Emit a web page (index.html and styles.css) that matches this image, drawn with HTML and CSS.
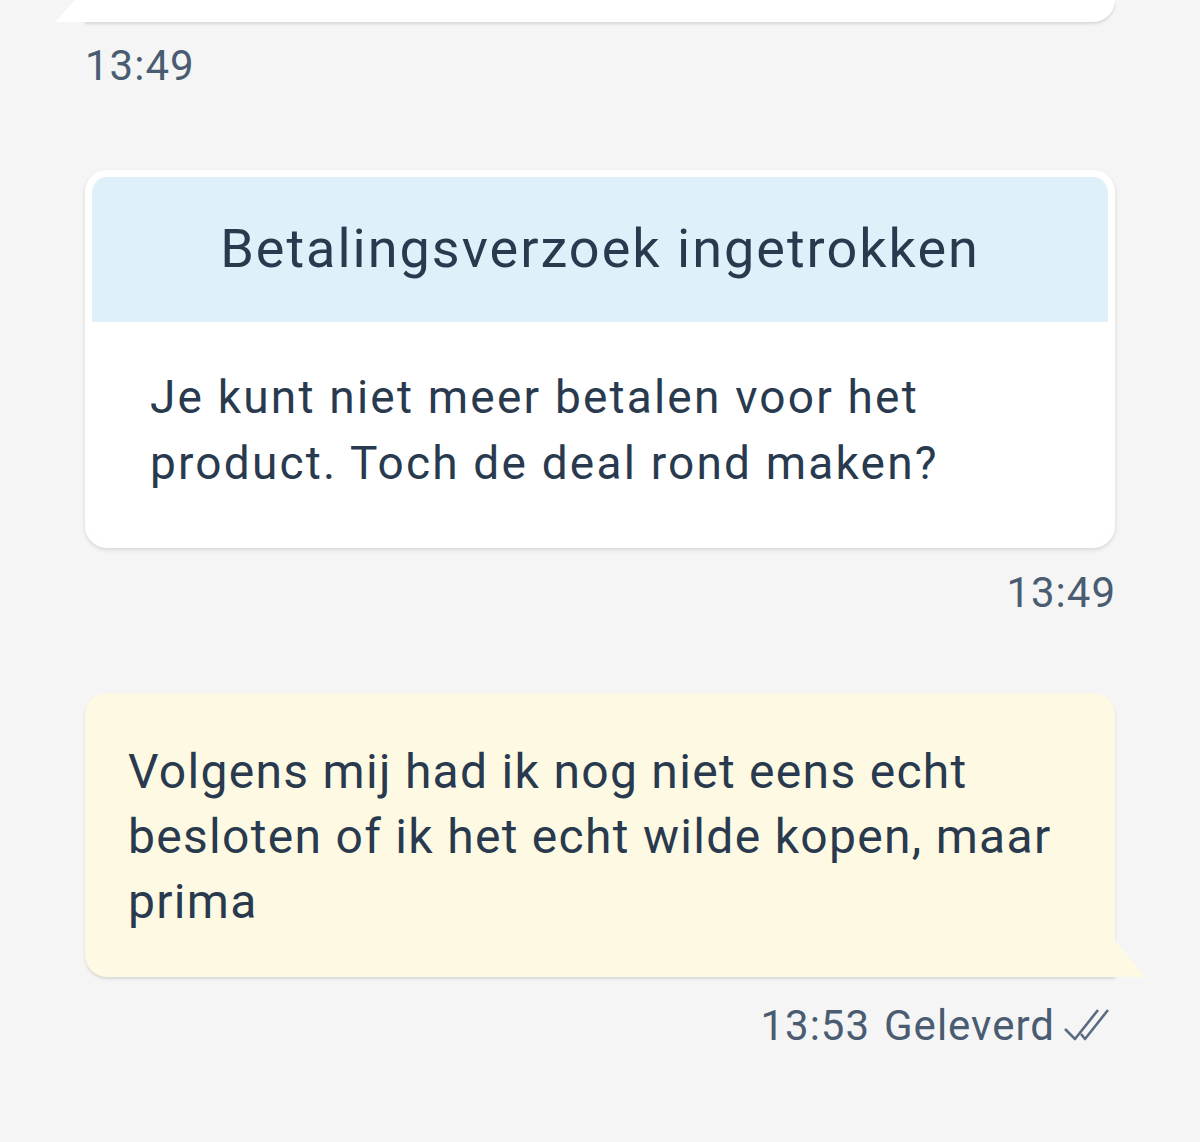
FILE: index.html
```html
<!DOCTYPE html>
<html lang="nl">
<head>
    <meta charset="UTF-8">
    <meta name="viewport" content="width=device-width, initial-scale=1.0">
    <link rel="stylesheet" href="styles.css">
    <title>Berichten</title>
</head>
<body>
    <div class="chat">
        <div class="bubble bubble-in bubble-cut"></div>
        <div class="time time-left">13:49</div>

        <div class="card">
            <div class="card-head">Betalingsverzoek ingetrokken</div>
            <div class="card-body">Je kunt niet meer betalen voor het product. Toch de deal rond maken?</div>
        </div>
        <div class="time time-right">13:49</div>

        <div class="bubble bubble-out">Volgens mij had ik nog niet eens echt besloten of ik het echt wilde kopen, maar prima</div>
        <div class="status">
            <span>13:53</span>
            <span>Geleverd</span>
            <svg class="ticks" width="47" height="33" viewBox="0 0 47 33">
                <path d="M2 21 L12 31 L35 2" />
                <path d="M18 26 L22 31 L45 2" />
            </svg>
        </div>
    </div>
</body>
</html>
```

FILE: styles.css
```css
* {
  box-sizing: border-box;
  margin: 0;
  padding: 0;
}

body {
  background: #f5f5f5;
  font-family: Roboto, "Liberation Sans", Arial, sans-serif;
  color: #293a4f;
}

.chat {
  display: flex;
  flex-direction: column;
  padding: 0 85px;
}

.bubble {
  position: relative;
  border-radius: 22px;
  box-shadow: 0 2px 3px rgba(0, 0, 0, 0.12);
}

.bubble-in {
  background: #fff;
}

.bubble-cut {
  height: 22px;
  border-radius: 0 0 22px 0;
}

/* little tail in the bottom corner */
.bubble-in::after {
  content: "";
  position: absolute;
  left: -30px;
  bottom: 0;
  width: 31px;
  height: 34px;
  background: #fff;
  clip-path: polygon(100% 0, 100% 100%, 0 100%);
}

.bubble-out {
  background: #fdf9e2;
  border-bottom-right-radius: 0;
  margin-top: 76px;
  padding: 46px 40px 43px 43px;
  font-size: 48px;
  line-height: 65px;
  letter-spacing: 1.3px;
}

.bubble-out::after {
  content: "";
  position: absolute;
  right: -30px;
  bottom: 0;
  width: 31px;
  height: 38px;
  background: #fdf9e2;
  clip-path: polygon(0 0, 100% 100%, 0 100%);
}

.time {
  font-size: 42px;
  line-height: 48px;
  letter-spacing: 1px;
  color: #4a5c72;
}

.time-left {
  margin-top: 20px;
  align-self: flex-start;
}

.time-right {
  margin-top: 21px;
  align-self: flex-end;
  margin-right: -1px;
}

.card {
  margin-top: 80px;
  background: #e0f0fb;
  border: 7px solid #fff;
  border-radius: 22px;
  box-shadow: 0 2px 4px rgba(0, 0, 0, 0.12);
  overflow: hidden;
}

.card-head {
  height: 145px;
  display: flex;
  align-items: center;
  justify-content: center;
  font-size: 54px;
  letter-spacing: 2px;
  padding-bottom: 2px;
}

.card-body {
  background: #fff;
  padding: 42px 58px 45px 58px;
  font-size: 46px;
  line-height: 66px;
  letter-spacing: 2.2px;
}

.status {
  margin-top: 25px;
  align-self: flex-end;
  margin-right: 5px;
  display: flex;
  align-items: center;
  gap: 14px;
  font-size: 42px;
  line-height: 48px;
  letter-spacing: 1px;
  color: #4a5c72;
}

.ticks {
  margin-left: -6px;
  margin-top: -4px;
}

.ticks path {
  fill: none;
  stroke: #5b6c80;
  stroke-width: 2.6;
  stroke-linejoin: round;
}
```
